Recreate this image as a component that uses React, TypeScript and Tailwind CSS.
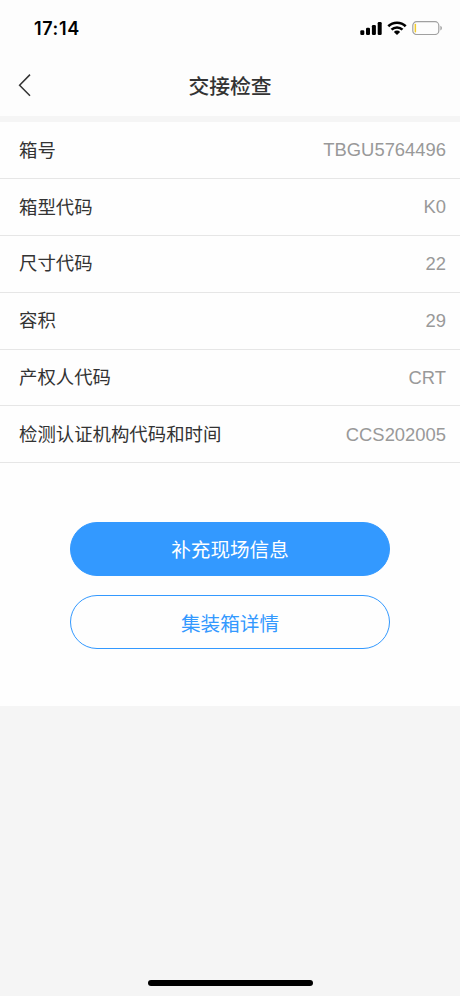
import { clsx } from "clsx";

const rows = [
  { label: "箱号", value: "TBGU5764496" },
  { label: "箱型代码", value: "K0" },
  { label: "尺寸代码", value: "22" },
  { label: "容积", value: "29" },
  { label: "产权人代码", value: "CRT" },
  { label: "检测认证机构代码和时间", value: "CCS202005" },
];

function StatusBar() {
  return (
    <div className="flex h-14 items-center justify-between pl-[34px] pr-[17px]">
      <span className="pt-px font-['Inter',sans-serif] text-[18px] font-semibold tracking-[0.6px] text-black">17:14</span>
      <div className="flex items-center gap-[5px]">
        <svg width="22" height="14" viewBox="0 0 22 14" fill="#000">
          <rect x="0.3" y="9.2" width="4" height="4.8" rx="1.2" />
          <rect x="6" y="6.8" width="4" height="7.2" rx="1.2" />
          <rect x="11.9" y="4" width="4" height="10" rx="1.2" />
          <rect x="17.7" y="1" width="4" height="13" rx="1.2" />
        </svg>
        <svg width="20" height="14" viewBox="0 0 20 14" fill="none" stroke="#000" strokeWidth="2.6">
          <path d="M1.3 5.3a12.4 12.4 0 0 1 17.4 0" />
          <path d="M4.5 8.7a7.8 7.8 0 0 1 11 0" />
          <path d="M10 13.9l-3.1-3a4.3 4.3 0 0 1 6.2 0z" fill="#000" stroke="none" />
        </svg>
        <svg width="31" height="14" viewBox="0 0 31 14" fill="none">
          <rect x="0.8" y="0.7" width="26" height="12.8" rx="3.8" stroke="#a0a0a0" strokeWidth="1.2" />
          <rect x="2.6" y="2.8" width="1.5" height="8.6" rx="0.7" fill="#f3cc2a" />
          <path d="M28.4 4.8v4.6c2-.8 2-3.8 0-4.6z" fill="#a0a0a0" />
        </svg>
      </div>
    </div>
  );
}

export default function App() {
  return (
    <div className="flex h-[996px] w-[460px] flex-col bg-[#f5f5f5] font-['Liberation_Sans','Noto_Sans_CJK_SC',sans-serif]">
      <header className="h-[116px] bg-[#fdfdfd]">
        <StatusBar />
        <div className="grid h-[60px] grid-cols-[60px_1fr_60px] items-center">
          <svg className="-mt-[3px] ml-[18px]" width="14" height="24" viewBox="0 0 14 24" fill="none" stroke="#333" strokeWidth="1.5">
            <path d="M12 1.6L1.6 12.2L12 22.8" />
          </svg>
          <h1 className="pt-[2px] text-center text-[20.8px] font-medium text-[#333]">交接检查</h1>
        </div>
      </header>

      <main className="mt-[6px] h-[584px] bg-[#fefefe]">
        {rows.map((r) => (
          <div key={r.label} className="flex h-[56.9px] items-center justify-between border-b border-[#e6e6e6] pl-[19px] pr-[14px]">
            <span className="pt-px text-[18.4px] text-[#333]">{r.label}</span>
            <span className="text-[18.4px] text-[#999]">{r.value}</span>
          </div>
        ))}
        <div className="mt-[58.2px] flex flex-col gap-[19.5px] px-[70px]">
          {["补充现场信息", "集装箱详情"].map((text, i) => (
            <button
              key={text}
              className={clsx(
                "h-[54.2px] rounded-full border border-[#3399ff] pt-[4px] text-[19.6px]",
                i === 0 ? "bg-[#3399ff] text-white" : "bg-[#fefefe] text-[#3399ff]"
              )}
            >
              {text}
            </button>
          ))}
        </div>
      </main>

      <div className="mx-auto mb-[10px] mt-auto h-[6px] w-[165px] rounded-full bg-black" />
    </div>
  );
}
